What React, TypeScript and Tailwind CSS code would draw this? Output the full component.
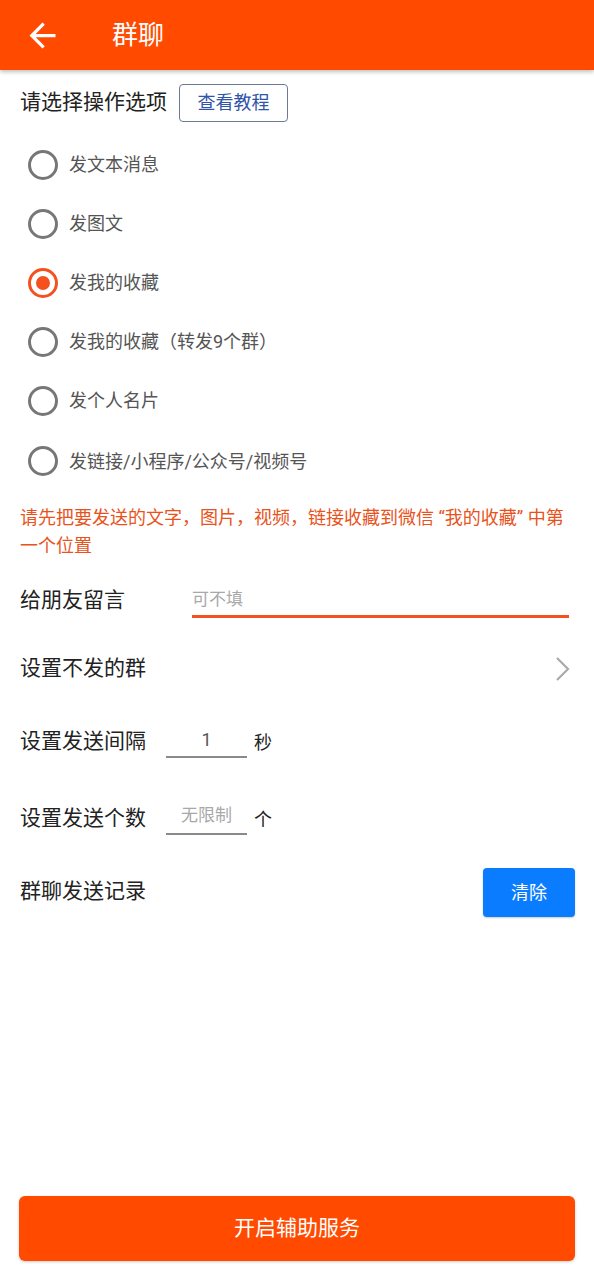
import { useState } from 'react'

const OPTIONS = [
  '发文本消息',
  '发图文',
  '发我的收藏',
  '发我的收藏（转发9个群）',
  '发个人名片',
  '发链接/小程序/公众号/视频号',
]

function Radio({ checked }: { checked: boolean }) {
  return (
    <span
      className={
        checked
          ? 'flex h-[30px] w-[30px] shrink-0 items-center justify-center rounded-full border-[3px] border-[#f4511e]'
          : 'flex h-[30px] w-[30px] shrink-0 items-center justify-center rounded-full border-[3px] border-[#777777]'
      }
    >
      {checked && <span className="h-[14px] w-[14px] rounded-full bg-[#f4511e]" />}
    </span>
  )
}

export default function App() {
  const [selected, setSelected] = useState(2)

  return (
    <div className="flex h-[1280px] w-[594px] flex-col bg-white font-['Roboto','Noto_Sans_CJK_SC',sans-serif] text-[#222222]">
      {/* Header */}
      <header className="relative z-10 flex h-[70px] shrink-0 items-center bg-[#ff4a00] shadow-[0_2px_4px_rgba(0,0,0,0.25)]">
        <svg viewBox="0 0 24 24" className="ml-[23px] h-[39px] w-[39px]" fill="white">
          <path d="M20 11H7.83l5.59-5.59L12 4l-8 8 8 8 1.41-1.41L7.83 13H20v-2z" />
        </svg>
        <h1 className="ml-[50px] text-[26px] font-normal text-white">群聊</h1>
      </header>

      {/* Options */}
      <div className="flex h-[65px] items-center px-5">
        <span className="text-[21px]">请选择操作选项</span>
        <button className="ml-3 h-[38px] w-[109px] rounded-[4px] border border-[#6b7a99] text-[18px] text-[#2f54a8]">
          查看教程
        </button>
      </div>

      <ul>
        {OPTIONS.map((label, i) => (
          <li
            key={label}
            onClick={() => setSelected(i)}
            className={
              i === OPTIONS.length - 1
                ? 'flex h-[62px] items-center gap-[11px] pl-[28px]'
                : 'flex h-[59px] items-center gap-[11px] pl-[28px]'
            }
          >
            <Radio checked={selected === i} />
            <span className="text-[18px] text-[#555555]">{label}</span>
          </li>
        ))}
      </ul>

      <p className="pl-5 pr-6 pt-3 text-[18px] leading-[28px] text-[#e8531c]">
        请先把要发送的文字，图片，视频，链接收藏到微信 “我的收藏” 中第一个位置
      </p>

      {/* Form rows */}
      <div className="mt-[10px] flex h-[62px] items-center pl-5 pr-[25px]">
        <span className="w-[172px] shrink-0 text-[21px]">给朋友留言</span>
        <div className="flex h-[34px] flex-1 items-start border-b-[3px] border-[#f4511e] pt-[3px]">
          <span className="text-[17px] text-[#a8a8a8]">可不填</span>
        </div>
      </div>

      <div className="flex h-[74px] items-center justify-between pl-5 pr-[23px]">
        <span className="text-[21px]">设置不发的群</span>
        <svg viewBox="0 0 16 26" className="h-[26px] w-[16px]" fill="none" stroke="#aaaaaa" strokeWidth="2.2">
          <path d="M2 2l11 11L2 24" />
        </svg>
      </div>

      <div className="flex h-[72px] items-center px-5">
        <span className="text-[21px]">设置发送间隔</span>
        <div className="ml-[20px] flex h-[32px] w-[81px] items-start justify-center border-b-2 border-[#8a8a8a]">
          <span className="text-[18px] text-[#555555]">1</span>
        </div>
        <span className="ml-[7px] text-[18px]">秒</span>
      </div>

      <div className="flex h-[82px] items-center px-5">
        <span className="text-[21px]">设置发送个数</span>
        <div className="ml-[20px] flex h-[32px] w-[81px] items-start justify-center border-b-2 border-[#8a8a8a]">
          <span className="text-[17px] text-[#a8a8a8]">无限制</span>
        </div>
        <span className="ml-[7px] text-[18px]">个</span>
      </div>

      <div className="flex h-[64px] items-center justify-between pl-5 pr-[19px]">
        <span className="text-[21px]">群聊发送记录</span>
        <button className="h-[49px] w-[92px] rounded-[4px] bg-[#0a7cff] text-[18px] text-white shadow-[0_1px_2px_rgba(0,0,0,0.2)]">
          清除
        </button>
      </div>

      <div className="flex-1" />

      <div className="px-[19px] pb-[19px]">
        <button className="h-[65px] w-full rounded-[6px] bg-[#ff4a00] text-[21px] text-white shadow-[0_1px_3px_rgba(0,0,0,0.2)]">
          开启辅助服务
        </button>
      </div>
    </div>
  )
}
